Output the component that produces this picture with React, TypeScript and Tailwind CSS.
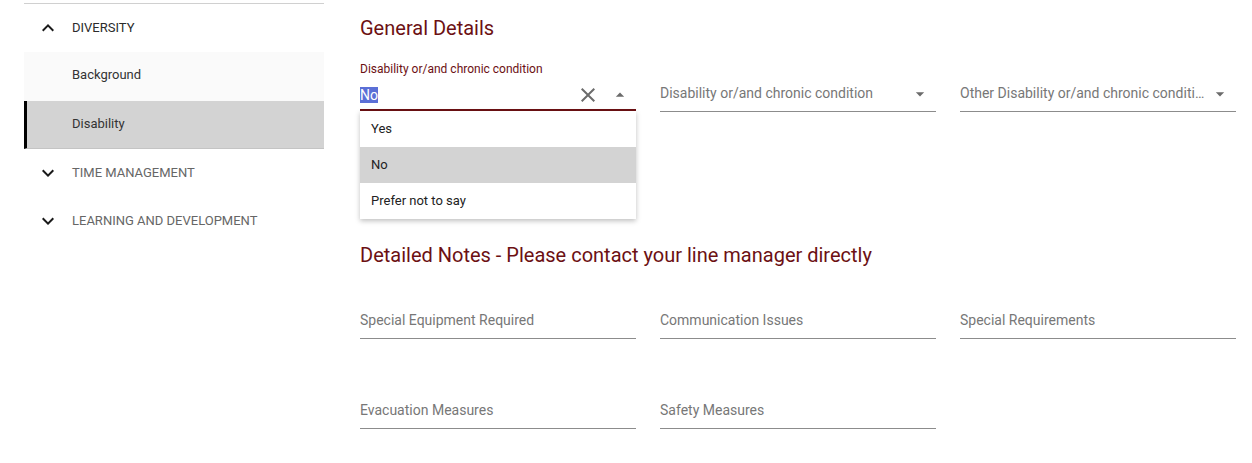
import { ReactNode } from 'react';

const ChevronUp = () => (
  <svg viewBox="0 0 24 24" className="w-6 h-6 text-[#1a1a1a]" fill="currentColor">
    <path d="M7.41 15.41L12 10.83l4.59 4.58L18 14l-6-6-6 6z" />
  </svg>
);

const ChevronDown = () => (
  <svg viewBox="0 0 24 24" className="w-6 h-6 text-[#1a1a1a]" fill="currentColor">
    <path d="M7.41 8.59L12 13.17l4.59-4.58L18 10l-6 6-6-6z" />
  </svg>
);

const ArrowDrop = ({ up }: { up?: boolean }) => (
  <svg viewBox="0 0 24 24" className="w-5 h-5 text-[#6b6b6b]" fill="currentColor">
    <path d={up ? 'M7 14l5-5 5 5z' : 'M7 10l5 5 5-5z'} />
  </svg>
);

const Close = () => (
  <svg viewBox="0 0 24 24" className="w-6 h-6 text-[#6b6b6b]" fill="currentColor">
    <path d="M19 6.41L17.59 5 12 10.59 6.41 5 5 6.41 10.59 12 5 17.59 6.41 19 12 13.41 17.59 19 19 17.59 13.41 12z" />
  </svg>
);

function SectionHeader({ title, open }: { title: string; open?: boolean }) {
  return (
    <div className="h-12 flex items-center">
      <div className="w-12 flex justify-center">{open ? <ChevronUp /> : <ChevronDown />}</div>
      <span className={`text-[13px] uppercase ${open ? 'text-[#2b2b2b]' : 'text-[#666]'}`}>{title}</span>
    </div>
  );
}

function Field({ placeholder, dropdown, children }: { placeholder?: string; dropdown?: boolean; children?: ReactNode }) {
  return (
    <div className="relative">
      <div className="h-[20px]" />
      <div className="h-[32px] flex items-center pb-1 border-b border-[#8c8c8c]">
        <span className="flex-1 truncate text-[14px] text-[#777]">{placeholder}</span>
        {dropdown && (
          <div className="pr-[6px] pl-1">
            <ArrowDrop />
          </div>
        )}
      </div>
      {children}
    </div>
  );
}

export default function App() {
  return (
    <div className="w-[1252px] h-[463px] bg-white flex overflow-hidden" style={{ fontFamily: 'Roboto, "Noto Sans", sans-serif' }}>
      <aside className="ml-6 w-[300px] mt-[3px] border-t border-[#d0d0d0] shrink-0">
        <SectionHeader title="Diversity" open />
        <div className="h-[49px] bg-[#fafafa] flex items-center pl-12 pb-[3px] text-[13px] text-[#333]">Background</div>
        <div className="h-[48px] bg-[#d3d3d3] border-l-[3px] border-black border-b border-b-[#c4c4c4] flex items-center pl-[45px] pb-[2px] text-[13px] text-[#333]">
          Disability
        </div>
        <SectionHeader title="Time Management" />
        <SectionHeader title="Learning and Development" />
      </aside>

      <main className="ml-9 w-[876px] pt-[14px]">
        <h2 className="text-[20px] leading-7 text-[#6c1013]">General Details</h2>

        <div className="mt-[18px] grid grid-cols-3 gap-x-6 items-start">
          <div className="relative">
            <div className="h-[18px] flex items-center text-[12px] text-[#6c1013]">Disability or/and chronic condition</div>
            <div className="h-[33px] flex items-center pt-[3px] border-b-2 border-[#6c1013]">
              <span className="flex-1 text-[14px] text-[#222]">
                <span className="bg-[#5b6fd6] text-white leading-4 inline-block">No</span>
              </span>
              <div className="flex items-center pr-[6px] gap-[10px]">
                <Close />
                <ArrowDrop up />
              </div>
            </div>
            <div className="absolute left-0 right-0 top-full bg-white shadow-[0_2px_5px_rgba(0,0,0,0.25)] z-10">
              <div className="h-9 flex items-center pl-[11px] text-[13px] text-[#222]">Yes</div>
              <div className="h-9 flex items-center pl-[11px] text-[13px] text-[#222] bg-[#d3d3d3]">No</div>
              <div className="h-9 flex items-center pl-[11px] text-[13px] text-[#222]">Prefer not to say</div>
            </div>
          </div>
          <Field placeholder="Disability or/and chronic condition" dropdown />
          <Field placeholder="Other Disability or/and chronic condition" dropdown />
        </div>

        <h2 className="mt-[129px] text-[20px] leading-7 text-[#6c1013]">
          Detailed Notes - Please contact your line manager directly
        </h2>

        <div className="mt-[18px] grid grid-cols-3 gap-x-6 gap-y-[38px]">
          <Field placeholder="Special Equipment Required" />
          <Field placeholder="Communication Issues" />
          <Field placeholder="Special Requirements" />
          <Field placeholder="Evacuation Measures" />
          <Field placeholder="Safety Measures" />
        </div>
      </main>
    </div>
  );
}
